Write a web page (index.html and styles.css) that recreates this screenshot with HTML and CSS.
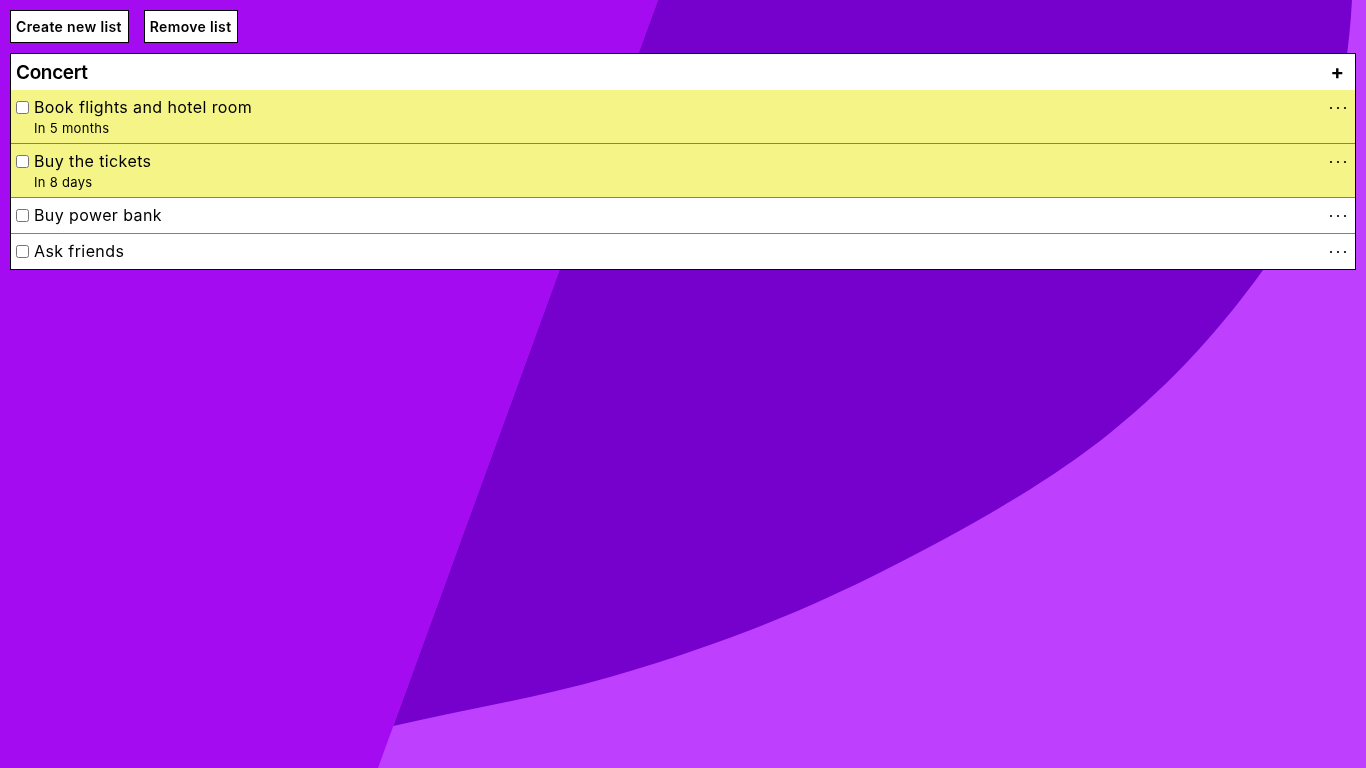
FILE: index.html
```html
<!DOCTYPE html>
<html lang="en">
<head>
<meta charset="utf-8">
<title>Lists</title>
<link rel="stylesheet" href="styles.css">
</head>
<body>
<svg class="bg" viewBox="0 0 1366 768" preserveAspectRatio="none" aria-hidden="true">
  <rect x="0" y="0" width="1366" height="768" fill="#a50bf0"/>
  <polygon points="658,0 1366,0 1366,768 378,768" fill="#bf3ffe"/>
  <path d="M658,0 L1352,0 C1347,90 1328,180 1263,270 C1224,324 1177,379 1110,433 C1053,479 975.5,524.3 885,570 C814.3,605.7 733,641.3 610,677 C538,697.9 466,708.9 393.3,726 Z" fill="#7600cc"/>
</svg>
<main class="app">
  <div class="toolbar">
    <button class="btn" type="button">Create new list</button>
    <button class="btn" type="button">Remove list</button>
  </div>
  <section class="card">
    <header class="card-head">
      <h1 class="card-title">Concert</h1>
      <span class="add">+</span>
    </header>
    <ul class="items">
      <li class="item due">
        <input type="checkbox" class="check">
        <div class="item-body">
          <div class="item-text">Book flights and hotel room</div>
          <div class="item-sub">In 5 months</div>
        </div>
        <svg class="more" width="18" height="4" viewBox="0 0 18 4"><circle cx="2" cy="2" r="1.1"/><circle cx="9" cy="2" r="1.1"/><circle cx="16" cy="2" r="1.1"/></svg>
      </li>
      <li class="item due">
        <input type="checkbox" class="check">
        <div class="item-body">
          <div class="item-text">Buy the tickets</div>
          <div class="item-sub">In 8 days</div>
        </div>
        <svg class="more" width="18" height="4" viewBox="0 0 18 4"><circle cx="2" cy="2" r="1.1"/><circle cx="9" cy="2" r="1.1"/><circle cx="16" cy="2" r="1.1"/></svg>
      </li>
      <li class="item">
        <input type="checkbox" class="check">
        <div class="item-body">
          <div class="item-text">Buy power bank</div>
        </div>
        <svg class="more" width="18" height="4" viewBox="0 0 18 4"><circle cx="2" cy="2" r="1.1"/><circle cx="9" cy="2" r="1.1"/><circle cx="16" cy="2" r="1.1"/></svg>
      </li>
      <li class="item">
        <input type="checkbox" class="check">
        <div class="item-body">
          <div class="item-text">Ask friends</div>
        </div>
        <svg class="more" width="18" height="4" viewBox="0 0 18 4"><circle cx="2" cy="2" r="1.1"/><circle cx="9" cy="2" r="1.1"/><circle cx="16" cy="2" r="1.1"/></svg>
      </li>
    </ul>
  </section>
</main>
</body>
</html>
```

FILE: styles.css
```css
html, body {
  margin: 0;
  padding: 0;
  height: 100%;
}
body {
  font-family: Inter, "Open Sans", sans-serif;
  color: #000;
  background: #a50bf0;
  overflow: hidden;
}
.bg {
  position: fixed;
  left: 0;
  top: 0;
  width: 1366px;
  height: 768px;
  z-index: 0;
}
.app {
  position: relative;
  z-index: 1;
  padding: 10px;
}
.toolbar {
  display: flex;
  gap: 15px;
  margin-bottom: 10px;
}
.btn {
  font-family: inherit;
  font-size: 14px;
  font-weight: 600;
  height: 33px;
  padding: 0 6px 0 5px;
  background: #fff;
  border: 1px solid #000;
  border-radius: 0;
  color: #000;
  letter-spacing: 0.35px;
}
.card {
  background: #fff;
  border: 1px solid #000;
}
.card-head {
  display: flex;
  align-items: center;
  justify-content: space-between;
  height: 36px;
  padding: 0 11px 0 5px;
}
.card-title {
  margin: 0;
  font-size: 19px;
  font-weight: 600;
  letter-spacing: -0.35px;
}
.add {
  font-size: 20px;
  font-weight: 700;
  line-height: 1;
}
.items {
  list-style: none;
  margin: 0;
  padding: 0;
}
.item {
  display: flex;
  align-items: flex-start;
  padding: 6px 8px 6px 5px;
  border-bottom: 1px solid #808080;
}
.item:last-child {
  border-bottom: none;
}
.item.due {
  background: #f5f587;
}
.check {
  width: 13px;
  height: 13px;
  margin: 5px 5px 0 0;
  flex: none;
}
.item-body {
  flex: 1;
}
.item-text {
  font-size: 16px;
  line-height: 23px;
  letter-spacing: 0.4px;
}
.item-sub {
  font-size: 13px;
  line-height: 18px;
  letter-spacing: 0.3px;
}
.more {
  margin-top: 10px;
  fill: #000;
  flex: none;
}
```
